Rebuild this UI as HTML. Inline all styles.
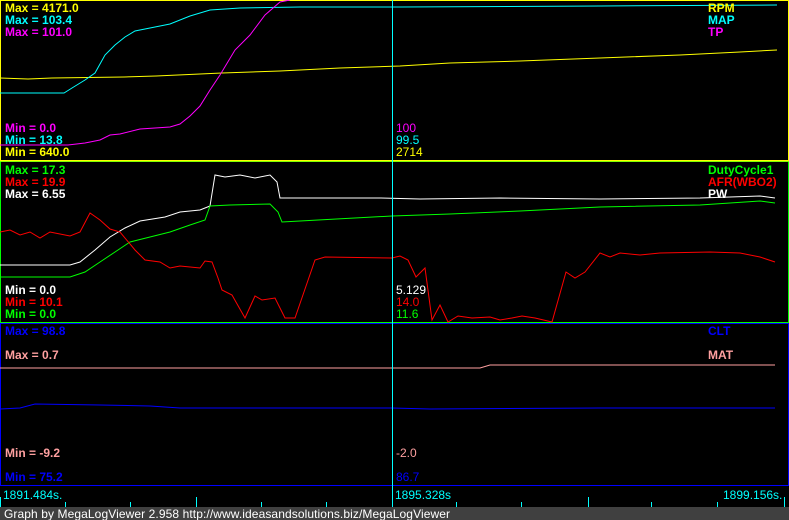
<!DOCTYPE html>
<html><head><style>
body{margin:0;background:#000;width:789px;height:520px;overflow:hidden}
svg{display:block}
text{font-family:"Liberation Sans",sans-serif;font-size:12px}
.b{font-weight:bold}
</style></head><body>
<svg width="789" height="520" viewBox="0 0 789 520">
<rect width="789" height="520" fill="#000"/>
<rect x="0.5" y="0.5" width="788" height="160" fill="none" stroke="#ffff00"/>
<rect x="0.5" y="161.5" width="788" height="161" fill="none" stroke="#00ff00"/>
<line x1="0" y1="161" x2="789" y2="161" stroke="#ffff00"/>
<rect x="0.5" y="323.5" width="788" height="162" fill="none" stroke="#0000ff"/>
<polyline fill="none" stroke="#ffff00" points="0,78 28,79 52,78 124,77 156,76 222,73 280,71 340,68 400,66 450,63 520,61 600,58 680,55 740,52 777,50"/>
<polyline fill="none" stroke="#00ffff" points="0,93 64,93 72,88 85,80 95,73 105,55 115,45 125,37 135,31 150,28 170,24 190,16 210,10 240,8 300,7 400,7 600,6 777,5"/>
<polyline fill="none" stroke="#ff00ff" points="0,145 68,145 85,143 100,140 110,135 120,134 140,129 170,127 180,124 190,116 200,106 210,90 220,75 235,50 250,35 265,15 280,2 290,0"/>
<polyline fill="none" stroke="#ffffff" points="0,265 70,265 80,262 95,250 110,237 125,228 140,221 165,217 180,212 200,210 210,206 215,175 225,177 240,175 255,178 270,175 277,182 280,198 380,198 420,199 500,198 600,199 700,198 760,196 775,198"/>
<polyline fill="none" stroke="#00ff00" points="0,277 70,277 85,272 100,262 115,252 130,242 150,237 170,232 190,225 205,220 210,206 230,205 270,204 278,212 282,222 300,221 392,216 450,214 520,211 600,207 700,205 760,201 775,203"/>
<polyline fill="none" stroke="#ff0000" points="0,232 10,230 20,235 30,232 40,238 50,232 70,236 80,232 90,213 100,220 110,229 120,232 135,250 145,260 160,262 170,268 180,266 200,268 205,261 212,262 218,278 222,290 232,295 245,318 255,296 262,300 275,298 285,318 295,318 315,260 325,257 392,258 400,256 408,260 416,277 425,268 432,320 440,305 448,322 458,316 472,318 490,317 500,320 512,318 522,316 535,318 552,322 566,272 575,278 585,272 600,253 610,257 620,253 640,255 660,253 710,252 740,253 760,257 775,262"/>
<polyline fill="none" stroke="#ffa0a0" points="0,368 480,368 490,365 775,365"/>
<polyline fill="none" stroke="#0000ff" points="0,409 20,408 35,404 100,405 150,406 180,408 300,408 392,408 430,409 600,408 775,408"/>
<line x1="392.5" y1="0" x2="392.5" y2="507" stroke="#00ffff"/>
<text x="5" y="12" class="b" fill="#ffff00">Max = 4171.0</text>
<text x="5" y="24" class="b" fill="#00ffff">Max = 103.4</text>
<text x="5" y="36" class="b" fill="#ff00ff">Max = 101.0</text>
<text x="5" y="132" class="b" fill="#ff00ff">Min = 0.0</text>
<text x="5" y="144" class="b" fill="#00ffff">Min = 13.8</text>
<text x="5" y="156" class="b" fill="#ffff00">Min = 640.0</text>
<text x="708" y="12" class="b" fill="#ffff00">RPM</text>
<text x="708" y="24" class="b" fill="#00ffff">MAP</text>
<text x="708" y="36" class="b" fill="#ff00ff">TP</text>
<text x="396" y="132" fill="#ff00ff">100</text>
<text x="396" y="144" fill="#00ffff">99.5</text>
<text x="396" y="156" fill="#ffff00">2714</text>
<text x="5" y="174" class="b" fill="#00ff00">Max = 17.3</text>
<text x="5" y="186" class="b" fill="#ff0000">Max = 19.9</text>
<text x="5" y="198" class="b" fill="#ffffff">Max = 6.55</text>
<text x="5" y="294" class="b" fill="#ffffff">Min = 0.0</text>
<text x="5" y="306" class="b" fill="#ff0000">Min = 10.1</text>
<text x="5" y="318" class="b" fill="#00ff00">Min = 0.0</text>
<text x="708" y="174" class="b" fill="#00ff00">DutyCycle1</text>
<text x="708" y="186" class="b" fill="#ff0000">AFR(WBO2)</text>
<text x="708" y="198" class="b" fill="#ffffff">PW</text>
<text x="396" y="294" fill="#ffffff">5.129</text>
<text x="396" y="306" fill="#ff0000">14.0</text>
<text x="396" y="318" fill="#00ff00">11.6</text>
<text x="5" y="335" class="b" fill="#0000ff">Max = 98.8</text>
<text x="5" y="359" class="b" fill="#ffa0a0">Max = 0.7</text>
<text x="708" y="335" class="b" fill="#0000ff">CLT</text>
<text x="708" y="359" class="b" fill="#ffa0a0">MAT</text>
<text x="5" y="457" class="b" fill="#ffa0a0">Min = -9.2</text>
<text x="5" y="481" class="b" fill="#0000ff">Min = 75.2</text>
<text x="396" y="457" fill="#ffa0a0">-2.0</text>
<text x="396" y="481" fill="#0000ff">86.7</text>
<g stroke="#00ffff">
<line x1="0.5" y1="497" x2="0.5" y2="507"/>
<line x1="65.5" y1="502" x2="65.5" y2="507"/>
<line x1="130.5" y1="502" x2="130.5" y2="507"/>
<line x1="196.5" y1="497" x2="196.5" y2="507"/>
<line x1="261.5" y1="502" x2="261.5" y2="507"/>
<line x1="326.5" y1="502" x2="326.5" y2="507"/>
<line x1="456.5" y1="502" x2="456.5" y2="507"/>
<line x1="521.5" y1="502" x2="521.5" y2="507"/>
<line x1="588.5" y1="497" x2="588.5" y2="507"/>
<line x1="651.5" y1="502" x2="651.5" y2="507"/>
<line x1="717.5" y1="502" x2="717.5" y2="507"/>
<line x1="784.5" y1="497" x2="784.5" y2="507"/>
</g>
<text x="3" y="499" fill="#00ffff">1891.484s.</text>
<text x="395" y="499" fill="#00ffff">1895.328s</text>
<text x="723" y="499" fill="#00ffff">1899.156s.</text>
<rect x="0" y="507" width="789" height="13" fill="#404040"/>
<text x="4" y="518" fill="#ffffff" textLength="446">Graph by MegaLogViewer 2.958 http://www.ideasandsolutions.biz/MegaLogViewer</text>
</svg>
</body></html>
